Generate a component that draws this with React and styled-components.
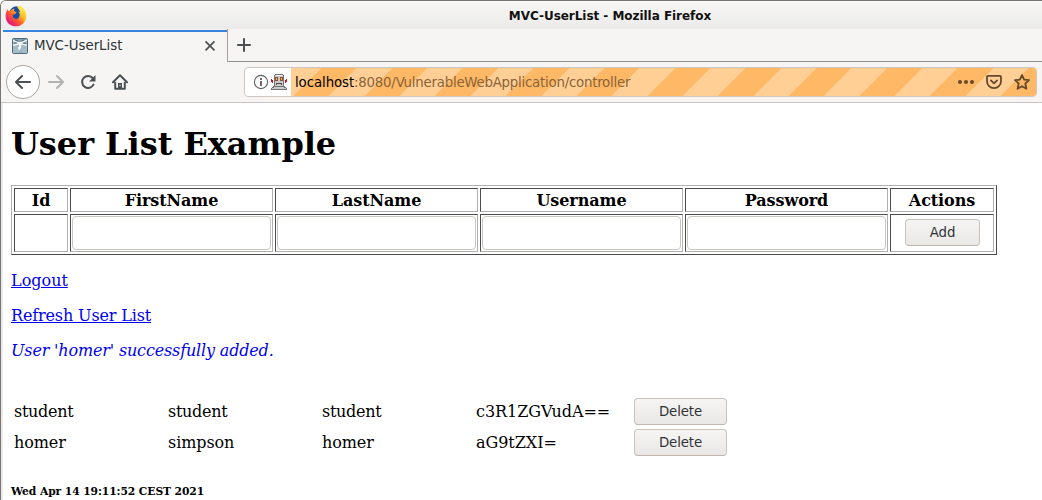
import React from 'react';
import styled, { createGlobalStyle } from 'styled-components';

const Global = createGlobalStyle`
  *, *::before, *::after { box-sizing: border-box; }
  body { margin: 0; background: #fff; overflow: hidden; }
`;

const Window = styled.div`
  width: 1042px;
  height: 500px;
  overflow: hidden;
  display: flex;
  flex-direction: column;
  border-top: 1px solid #777573;
  border-left: 1px solid #777573;
  border-top-left-radius: 6px;
  background: #f6f5f4;
  font-family: 'DejaVu Sans', sans-serif;
`;

const TitleBar = styled.header`
  height: 28px;
  flex: none;
  display: flex;
  align-items: center;
  padding-left: 4px;
  background: linear-gradient(#f7f6f5, #ebebe9);
  border-top: 1px solid #fbfafa;
  svg { display: block; }
`;

const Title = styled.div`
  flex: 1;
  padding: 1px 0 0 151px;
  text-align: center;
  font-size: 12px;
  font-weight: 700;
  line-height: 16px;
  letter-spacing: -0.04px;
  color: #111;
`;

const TabStrip = styled.div`
  height: 33px;
  flex: none;
  display: flex;
  padding-left: 2px;
`;

const Tab = styled.div`
  width: 225px;
  display: flex;
  align-items: center;
  padding: 0 11px 0 9px;
  border-right: 1px solid #a3a09d;
  background: linear-gradient(#3584e4, #3584e4) 0 1px / 100% 2px no-repeat;
  font-size: 13.33px;
  color: #2e3436;
  svg { display: block; flex: none; }
`;

const TabLabel = styled.span`
  flex: 1;
  margin-left: 6px;
  line-height: 18px;
`;

const StripRest = styled.div`
  flex: 1;
  padding: 8px 0 0 8px;
  border-bottom: 1px solid #92908e;
  svg { display: block; }
`;

const Toolbar = styled.div`
  height: 41px;
  flex: none;
  display: flex;
  align-items: center;
  padding: 0 5px 0 5px;
  border-bottom: 1px solid #c9c5c1;
`;

const NavButton = styled.div`
  width: 32px;
  height: 34px;
  display: flex;
  align-items: center;
  justify-content: center;
`;

const BackButton = styled(NavButton)`
  width: 34px;
  border: 1px solid #a9a7a5;
  border-radius: 50%;
  background: #fff;
`;

const AddressBar = styled.div`
  width: 793px;
  height: 30px;
  margin: 0 0 1px auto;
  display: flex;
  overflow: hidden;
  border: 1px solid #cdc7c2;
  border-radius: 4px;
  background: #fff;
`;

const Identity = styled.div`
  width: 46px;
  flex: none;
  display: flex;
  align-items: center;
  gap: 2px;
  padding-left: 8px;
`;

const Location = styled.div`
  flex: 1;
  display: flex;
  align-items: center;
  padding: 0 6px 0 4px;
  background: repeating-linear-gradient(-45deg, #ffb866 0, #ffb866 25px, #ffcf96 25px, #ffcf96 50px);
  font-size: 13.33px;
  line-height: 18px;
  color: #000;
`;

const Host = styled.span`
  padding-top: 2px;
  letter-spacing: -0.08px;
`;

const Path = styled.span`
  flex: 1;
  padding-top: 2px;
  letter-spacing: -0.23px;
  color: #8a6337;
`;

const PageActions = styled.div`
  display: flex;
  align-items: center;
  gap: 12px;
  color: #65492b;
`;

const Page = styled.main`
  flex: 1;
  min-height: 0;
  margin-left: 2px;
  padding: 22px 8px 0;
  overflow: hidden;
  background: #fff;
  box-shadow: -2px 0 #edebe9;
  font: 16px/19px 'DejaVu Serif', serif;
  color: #000;
`;

const Heading = styled.h1`
  margin: 0 0 22px;
  font-size: 32px;
  line-height: 38px;
  letter-spacing: -0.04px;
`;

const FormTable = styled.table`
  width: 986px;
  table-layout: fixed;
  border: 1px solid;
  border-color: #b0b0b0 #4b4b4b #4b4b4b #b0b0b0;
  border-spacing: 2px;
`;

const cellBorder = `
  padding: 1px;
  border: 1px solid;
  border-color: #4b4b4b #b0b0b0 #b0b0b0 #4b4b4b;
`;

const HeadCell = styled.th`
  ${cellBorder}
  width: ${(p) => p.$width}px;
  height: 24px;
  letter-spacing: -0.08px;
`;

const FormCell = styled.td`
  ${cellBorder}
  height: 38px;
  text-align: center;
`;

const Field = styled.input`
  display: block;
  width: 100%;
  height: 34px;
  border: 1px solid #c9c6c0;
  border-radius: 4px;
  background: #fff;
`;

const Button = styled.button`
  display: block;
  margin: 0 auto;
  width: ${(p) => p.$width}px;
  height: 27px;
  padding: 0;
  border: 1px solid #c9c3be;
  border-bottom-color: #beb5ae;
  border-radius: 4px;
  background: linear-gradient(#f6f5f4, #eae8e7);
  font: 13.33px/18px 'DejaVu Sans', sans-serif;
  letter-spacing: -0.1px;
  color: #2e3436;
`;

const AddButton = styled(Button)`
  margin-bottom: 1px;
  padding: 1px 0 0 1px;
`;

const Paragraph = styled.p`
  margin: 16px 0 0;
`;

const Link = styled.a`
  color: #0000ee;
  text-decoration: underline;
  letter-spacing: ${(p) => p.$tracking || 0}px;
`;

const Message = styled.em`
  color: #0000ee;
  letter-spacing: -0.16px;
`;

const UserTable = styled.table`
  margin-top: 35px;
  table-layout: fixed;
  width: 717px;
  border-spacing: 2px;
`;

const UserCell = styled.td`
  width: ${(p) => p.$width}px;
  height: 29px;
  padding: 0 1px;
  letter-spacing: ${(p) => p.$tracking}px;
`;

const Timestamp = styled.h6`
  margin: 26px 0 0;
  font-size: 10.72px;
  line-height: 13px;
  letter-spacing: -0.08px;
`;

const FirefoxLogo = () => (
  <svg width="22" height="22" viewBox="0 0 22 22">
    <defs>
      <linearGradient id="flame" x1="0.9" y1="0.1" x2="0.15" y2="0.85">
        <stop offset="0" stopColor="#fff04a" />
        <stop offset="0.35" stopColor="#ffba24" />
        <stop offset="0.62" stopColor="#ff5b2e" />
        <stop offset="1" stopColor="#e3157f" />
      </linearGradient>
    </defs>
    <circle cx="12" cy="9.5" r="8.3" fill="#174ea8" />
    <path d="M2.1 4.2 3.7 6 5.3 5.7C7 4 8.6 3.7 9.4 3.8L8.8 6l2.8 1.5-1.7 1.8-2.3.4.5 2.8c1.5 1.9 4.4 1.8 5.8-.1 1.8-2.5.3-4.9-.8-5.8l2 .3C14 4 12.5 3.5 12 1c4.4-.9 9 3.6 9.3 8.4C22 16 17.2 21.3 11 21.3 4.6 21.3.4 16.5.6 10.7.7 8 1.5 6.7 2.1 4.2Z" fill="url(#flame)" />
    <path d="M12 1c2.8 2.6 4.6 5.2 4.5 9.2 2.2-3.8.5-7.4-1.7-8.6Z" fill="#ffe34c" />
  </svg>
);

const Favicon = () => (
  <svg width="16" height="16" viewBox="0 0 16 16">
    <rect x=".5" y=".5" width="15" height="15" rx="1" fill="#9ab3c0" stroke="#4d6a7a" />
    <path d="M1 1h14v3H1Z" fill="#7f9dac" />
    <path d="M1 9.5 7 8v7H1ZM10 9l5-1v7h-5Z" fill="#a5bbc6" />
    <path d="M1 2.5 7 5l2-.5 6-2.2M8 5.5 1 7.5M8.5 5.5l6.5 1.8" stroke="#f6f9fa" strokeWidth="1.4" fill="none" />
    <path d="m6.5 4.5 3.2.4-.6 4.6-1.6 3.2-1.4-2.2 1-3Z" fill="#f6f9fa" />
    <path d="m3 1.8 3 1.6m3.4 0 2.8-1.6M2 5 5 5m6 .3 3-.1" stroke="#2f4d5c" strokeWidth=".7" />
  </svg>
);

const Arrow = ({ color, flip }) => (
  <svg width="16" height="16" viewBox="0 0 16 16" fill="none" stroke={color} strokeWidth="2" strokeLinecap="round" strokeLinejoin="round">
    <path d={flip ? 'M1 8h14M9 2l6 6-6 6' : 'M15 8H1M7 2 1 8l6 6'} />
  </svg>
);

const Reload = () => (
  <svg width="16" height="16" viewBox="0 0 16 16" fill="none" stroke="#4b5052" strokeWidth="2">
    <path d="M12.7 4A6 6 0 1 0 13.5 10.6" strokeLinecap="round" />
    <path d="M15.5 1v6.5H9Z" fill="#4b5052" stroke="none" />
  </svg>
);

const Home = () => (
  <svg width="16" height="16" viewBox="0 0 16 16" fill="none" stroke="#4b5052">
    <path d="M1 8.2 8 1.2l7 7" strokeWidth="2" strokeLinecap="round" strokeLinejoin="round" />
    <path d="M3.2 8v6.8h9.6V8" strokeWidth="2" strokeLinejoin="round" />
    <path d="M6 15V9h4v6Z" fill="#4b5052" stroke="none" />
    <path d="M8 10.8v1.4" stroke="#f6f5f4" />
  </svg>
);

const Info = () => (
  <svg width="16" height="16" viewBox="0 0 16 16" fill="none" stroke="#626262">
    <circle cx="8" cy="8" r="6.6" strokeWidth="1.1" />
    <path d="M8 7v5M8 4v2" strokeWidth="1.9" />
  </svg>
);

const Robot = () => (
  <svg width="16" height="16" viewBox="0 0 16 16" shapeRendering="crispEdges">
    <path d="M4 0h8v1h1v11h1v1h1v1h1v2H0v-2h1v-1h1v-1h1V1h1Z" fill="#747474" />
    <path d="M4 1h8v11H4ZM3 13h10v1H3ZM1 14h14v1H1Z" fill="#c9c9c9" />
    <path d="M5 1h6v1H5Z" fill="#eeeeee" />
    <path d="M4 3h3v4H4ZM9 3h3v4H9Z" fill="#8a5136" />
    <path d="M5 4h1v2H5ZM10 4h1v2h-1Z" fill="#ffb93c" />
    <path d="M0 5h1v3H0ZM1 6h1v3H1ZM15 5h1v3h-1ZM14 6h1v3h-1Z" fill="#c5162b" />
    <path d="M5 9h6v1H5ZM5 10h1v1H5ZM10 10h1v1h-1Z" fill="#4b4b4b" />
  </svg>
);

const Dots = () => (
  <svg width="16" height="16" viewBox="0 0 16 16" fill="currentColor">
    <circle cx="2" cy="8" r="2" /><circle cx="8" cy="8" r="2" /><circle cx="14" cy="8" r="2" />
  </svg>
);

const Pocket = () => (
  <svg width="16" height="16" viewBox="0 0 16 16" fill="none" stroke="currentColor" strokeWidth="1.8" strokeLinecap="round" strokeLinejoin="round">
    <path d="M2 1.9h12a1 1 0 0 1 1 1v4.3a7 7 0 0 1-14 0V2.9a1 1 0 0 1 1-1Z" />
    <path d="m4.9 6.4 3.1 3 3.1-3" />
  </svg>
);

const Star = () => (
  <svg width="16" height="16" viewBox="0 0 16 16" fill="none" stroke="currentColor" strokeWidth="1.8" strokeLinejoin="round">
    <path d="m8 1 2.1 4.6 4.9.6-3.7 3.3 1.1 5.2L8 12.2l-4.4 2.5 1.1-5.2L1 6.2l4.9-.6Z" />
  </svg>
);

const Close = () => (
  <svg width="12" height="12" viewBox="0 0 12 12" fill="none" stroke="#4b5052" strokeWidth="1.7">
    <path d="m1.5 1.3 9 9m0-9-9 9" />
  </svg>
);

const Plus = () => (
  <svg width="16" height="16" viewBox="0 0 16 16" fill="none" stroke="#4b5052" strokeWidth="2" strokeLinecap="round">
    <path d="M2 8h12M8 2v12" />
  </svg>
);

const columns = [
  ['Id', 54],
  ['FirstName', 203],
  ['LastName', 203],
  ['Username', 203],
  ['Password', 203],
  ['Actions', 104],
];

const users = [
  { tracking: -0.3, values: ['student', 'student', 'student', 'c3R1ZGVudA=='] },
  { tracking: -0.08, values: ['homer', 'simpson', 'homer', 'aG9tZXI='] },
];

export default function App() {
  return (
    <>
      <Global />
      <Window>
        <TitleBar>
          <FirefoxLogo />
          <Title>MVC-UserList - Mozilla Firefox</Title>
        </TitleBar>
        <TabStrip>
          <Tab>
            <Favicon />
            <TabLabel>MVC-UserList</TabLabel>
            <Close />
          </Tab>
          <StripRest><Plus /></StripRest>
        </TabStrip>
        <Toolbar>
          <BackButton><Arrow color="#4b5052" /></BackButton>
          <NavButton><Arrow color="#b1b3b2" flip /></NavButton>
          <NavButton><Reload /></NavButton>
          <NavButton><Home /></NavButton>
          <AddressBar>
            <Identity><Info /><Robot /></Identity>
            <Location>
              <Host>localhost</Host>
              <Path>:8080/VulnerableWebApplication/controller</Path>
              <PageActions><Dots /><Pocket /><Star /></PageActions>
            </Location>
          </AddressBar>
        </Toolbar>
        <Page>
          <Heading>User List Example</Heading>
          <FormTable>
            <thead>
              <tr>
                {columns.map(([name, width]) => <HeadCell key={name} $width={width}>{name}</HeadCell>)}
              </tr>
            </thead>
            <tbody>
              <tr>
                <FormCell />
                {columns.slice(1, 5).map(([name]) => (
                  <FormCell key={name}><Field aria-label={name} /></FormCell>
                ))}
                <FormCell><AddButton $width={75}>Add</AddButton></FormCell>
              </tr>
            </tbody>
          </FormTable>
          <Paragraph><Link href="#logout">Logout</Link></Paragraph>
          <Paragraph><Link href="#refresh" $tracking={-0.14}>Refresh User List</Link></Paragraph>
          <Paragraph><Message>User 'homer' successfully added.</Message></Paragraph>
          <UserTable>
            <tbody>
              {users.map(({ tracking, values }) => (
                <tr key={values[0]}>
                  {values.map((value, i) => (
                    <UserCell key={i} $width={i === 3 ? 156 : 152} $tracking={i === 3 ? -0.05 : tracking}>{value}</UserCell>
                  ))}
                  <UserCell $width={95}><Button $width={93}>Delete</Button></UserCell>
                </tr>
              ))}
            </tbody>
          </UserTable>
          <Timestamp>Wed Apr 14 19:11:52 CEST 2021</Timestamp>
        </Page>
      </Window>
    </>
  );
}
